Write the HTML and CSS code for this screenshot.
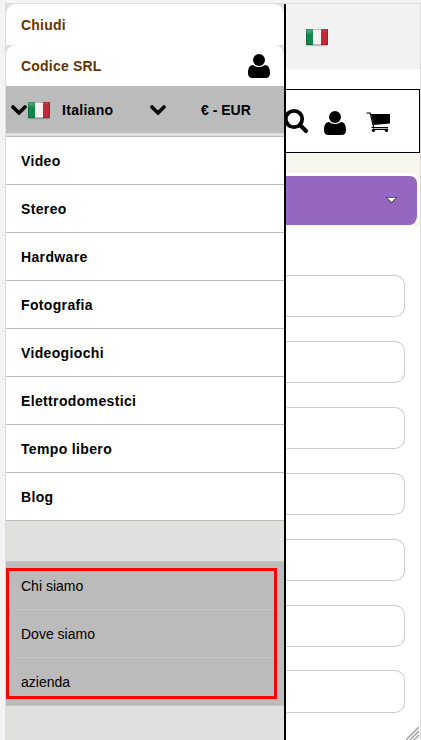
FILE: index.html
```html
<!DOCTYPE html>
<html lang="it">
<head>
    <meta charset="UTF-8">
    <meta name="viewport" content="width=device-width, initial-scale=1.0">
    <title>Codice SRL</title>
    <link rel="stylesheet" href="styles.css">
</head>
<body>
    <!-- shared icons -->
    <svg class="defs" width="0" height="0">
        <linearGradient id="shine" x1="0" y1="0" x2="0.5" y2="1">
            <stop offset="0" stop-color="#fff" stop-opacity="0.35"/>
            <stop offset="0.6" stop-color="#fff" stop-opacity="0"/>
        </linearGradient>
        <symbol id="user" viewBox="0 0 22 24">
            <ellipse cx="11" cy="6" rx="6" ry="6"/>
            <path d="M5.2 11C1.500 11 0 14.500 0 19c0 3.500 1.500 5 4.500 5h13c3 0 4.500-1.500 4.500-5 0-4.500-1.500-8-5.200-8C15.500 12.300 13.500 13 11 13s-4.500-.7-5.800-2z"/>
        </symbol>
        <symbol id="chevron" viewBox="0 0 16 10">
            <path d="M2 2l6 6 6-6" fill="none" stroke="#000" stroke-width="3.600" stroke-linecap="round"/>
        </symbol>
        <symbol id="flag" viewBox="0 0 22 18">
            <rect x="0.500" y="16" width="21" height="1.200" fill="#000" opacity="0.2"/>
            <rect width="7" height="16" fill="#118a49"/>
            <rect x="7" width="8" height="16" fill="#f3f3f3"/>
            <rect x="15" width="7" height="16" fill="#c02a38"/>
            <rect width="22" height="9" fill="url(#shine)"/>
            <rect x="0.500" y="0.500" width="21" height="15" fill="none" stroke="#000" stroke-opacity="0.22"/>
        </symbol>
    </svg>

    <div class="frame">
        <div class="drawer">
            <div class="head">Chiudi</div>
            <div class="head">
                <span>Codice SRL</span>
                <svg class="user" width="22" height="24"><use href="#user"/></svg>
            </div>
            <div class="settings">
                <svg class="chevron" width="16" height="10"><use href="#chevron"/></svg>
                <svg class="flag" width="22" height="18"><use href="#flag"/></svg>
                <span class="lang">Italiano</span>
                <svg class="chevron" width="16" height="10"><use href="#chevron"/></svg>
                <span class="currency">€ - EUR</span>
            </div>
            <ul class="menu">
                <li>Video</li>
                <li>Stereo</li>
                <li>Hardware</li>
                <li>Fotografia</li>
                <li>Videogiochi</li>
                <li>Elettrodomestici</li>
                <li>Tempo libero</li>
                <li>Blog</li>
            </ul>
            <ul class="pages">
                <li>Chi siamo</li>
                <li>Dove siamo</li>
                <li>azienda</li>
            </ul>
            <div class="highlight"></div>
        </div>

        <div class="page">
            <div class="topbar">
                <svg width="22" height="18"><use href="#flag"/></svg>
            </div>
            <div class="nav">
                <svg class="search" width="26" height="26" viewBox="0 0 26 26">
                    <circle cx="11" cy="11" r="8.200" fill="none" stroke="#000" stroke-width="3.800"/>
                    <path d="M17 17l6 6" stroke="#000" stroke-width="4" stroke-linecap="round"/>
                </svg>
                <svg class="user" width="22" height="24"><use href="#user"/></svg>
                <svg class="cart" width="24" height="20" viewBox="0 0 24 20">
                    <path d="M5 2h19v9.500L7.500 13z"/>
                    <path d="M0.500 1h3.700l3.500 14.500M5.500 15.500h16.500M7 17.300h15" fill="none" stroke="#000" stroke-width="1.200"/>
                    <circle cx="7.500" cy="18.300" r="1.700"/>
                    <circle cx="20.500" cy="18.300" r="1.700"/>
                </svg>
            </div>
            <div class="band">
                <div class="select">
                    <svg width="11" height="7" viewBox="0 0 11 7">
                        <path d="M0.500 0.500h10l-5 5.500z" fill="#fff" stroke="#222"/>
                        <path d="M1.500 1.200h8" stroke="#fff"/>
                    </svg>
                </div>
            </div>
            <div class="form">
                <div class="field"></div>
                <div class="field"></div>
                <div class="field"></div>
                <div class="field"></div>
                <div class="field"></div>
                <div class="field"></div>
                <div class="field last"></div>
            </div>
            <svg class="grip" width="13" height="13" viewBox="0 0 13 13">
                <path d="M0 13L13 0M4 13l9-9M8 13l5-5" stroke="#999" stroke-width="1.300"/>
            </svg>
        </div>
    </div>
</body>
</html>
```
FILE: styles.css
```css
* {
    box-sizing: border-box;
    margin: 0;
    padding: 0;
}
body {
    height: 740px;
    padding: 3px 0 0 5px;
    overflow: hidden;
    background: #f3f3f3;
    color: #000;
    font-family: "Liberation Sans", Arial, sans-serif;
    font-size: 14px;
}
svg {
    display: block;
    flex: none;
}
.defs {
    position: absolute;
}
ul {
    list-style: none;
}
.frame {
    display: flex;
    height: 737px;
    border: 1px solid #ddd;
    border-bottom: 0;
    background: #fff;
}

/* Drawer */
.drawer {
    position: relative;
    flex: none;
    width: 280px;
    border-right: 2px solid #000;
    background: #e0e0de;
}
.head {
    display: flex;
    align-items: center;
    justify-content: space-between;
    height: 41px;
    padding: 0 14px 0 15px;
    border-radius: 10px 10px 0 0;
    background: #fff;
    color: #663300;
    font-weight: bold;
    letter-spacing: 0.2px;
}
.head .user {
    margin-top: 0;
}
.settings {
    display: flex;
    align-items: center;
    height: 47px;
    padding-left: 5px;
    background: #bbb;
    font-weight: bold;
}
.settings .flag {
    margin: 2px 0 0 1px;
}
.lang {
    width: 100px;
    padding-left: 12px;
    letter-spacing: 0.3px;
}
.currency {
    margin-left: 35px;
}
.menu {
    margin-top: 3px;
    border-top: 1px solid #bbb;
    font-weight: bold;
    letter-spacing: 0.35px;
}
.menu li {
    height: 48px;
    padding-left: 15px;
    border-bottom: 1px solid #bbb;
    background: #fff;
    line-height: 48px;
}
.pages {
    margin-top: 40px;
    border-top: 1px solid #c4c4c4;
    background: #bbb;
}
.pages li {
    height: 48px;
    padding-left: 15px;
    border-bottom: 1px solid #c4c4c4;
    line-height: 48px;
}
/* red marker over the static pages */
.highlight {
    position: absolute;
    top: 564px;
    left: 0;
    width: 271px;
    height: 131px;
    border: 3px solid #f00;
}

/* Page */
.page {
    position: relative;
    flex: 1;
    overflow: hidden;
}
.topbar {
    height: 65px;
    padding: 25px 0 0 20px;
    background: #f2f2f2;
}
.nav {
    display: flex;
    height: 64px;
    margin-top: 20px;
    border: 1px solid #000;
    border-left: 0;
}
.nav .search {
    margin: 18px 0 0 -3px;
}
.nav .user {
    margin: 21px 0 0 15px;
}
.nav .cart {
    margin: 22px 0 0 20px;
}
.band {
    height: 73px;
    padding-top: 20px;
    background: #f6f6ec;
}
.select {
    display: flex;
    align-items: center;
    justify-content: flex-end;
    height: 53px;
    padding-right: 20px;
    border: solid #fff;
    border-width: 3px 3px 1px 0;
    border-radius: 0 10px 10px 0;
    background: #9567c1;
}
.form {
    padding: 49px 15px 0 0;
}
.field {
    height: 42px;
    margin-bottom: 24px;
    border: 1px solid #ccc;
    border-left: 0;
    border-radius: 0 10px 10px 0;
}
.field.last {
    height: 43px;
    margin-top: -1px;
}
.grip {
    position: absolute;
    right: 1px;
    bottom: 0;
}
```
